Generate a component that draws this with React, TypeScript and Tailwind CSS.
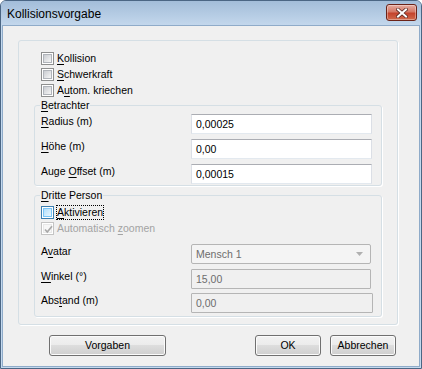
import React from 'react';

type BoxVariant = 'normal' | 'hover' | 'disabled';

const Ul = ({ children }: { children: React.ReactNode }) => (
  <span className="underline decoration-1 underline-offset-[2px]">{children}</span>
);

// Win7 style checkbox square
const CheckBox = ({ variant = 'normal', checked = false }: { variant?: BoxVariant; checked?: boolean }) => {
  const outer =
    variant === 'hover' ? 'border-[#3c7fb1]' : variant === 'disabled' ? 'border-[#c4c4c4]' : 'border-[#8e8f8f]';
  const inner =
    variant === 'hover'
      ? 'border-[#79c6f9] bg-[linear-gradient(135deg,#b1dffd,#e9f7fe)]'
      : variant === 'disabled'
        ? 'border-[#e8e8e8] bg-[#f7f7f7]'
        : 'border-[#b0b4ba] bg-[linear-gradient(135deg,#c9ccd1,#f6f6f6)]';

  return (
    <span className={`relative flex w-[13px] h-[13px] shrink-0 border ${outer} bg-white p-[1px]`}>
      <span className={`flex-1 border ${inner}`} />
      {checked && (
        <svg className="absolute left-[1px] top-[1px]" width="11" height="11" viewBox="0 0 11 11">
          <path d="M2 5.5 L4.3 8 L9 2.2" fill="none" stroke="#a8a8a8" strokeWidth="1.7" />
        </svg>
      )}
    </span>
  );
};

const CheckRow = ({
  children,
  variant,
  checked,
  focused = false,
  disabled = false,
}: {
  children: React.ReactNode;
  variant?: BoxVariant;
  checked?: boolean;
  focused?: boolean;
  disabled?: boolean;
}) => (
  <div className="flex items-center h-[16px] gap-[2px]">
    <CheckBox variant={variant} checked={checked} />
    <span
      className={`${focused ? 'border border-dotted border-black' : 'border border-transparent'} ${
        disabled ? 'text-[#a3a3a3]' : ''
      }`}
    >
      {children}
    </span>
  </div>
);

const FieldRow = ({ label, children, className = '' }: { label: React.ReactNode; children: React.ReactNode; className?: string }) => (
  <div className={`flex items-start ${className}`}>
    <span className="w-[150px] pt-[1px]">{label}</span>
    {children}
  </div>
);

const TextBox = ({ value, w = 'w-[181px]' }: { value: string; w?: string }) => (
  <div className={`${w} h-[20px] flex items-center pl-[4px] bg-white border border-[#dbdfe6] border-t-[#abadb3] border-b-[#e3e9ef]`}>
    {value}
  </div>
);

const DisabledBox = ({ value, w = 'w-[180px]' }: { value: string; w?: string }) => (
  <div className={`${w} h-[20px] flex items-center pl-[4px] bg-[#f0f0f0] border border-[#b5b5b5] rounded-[1px] text-[#6d6d6d]`}>
    {value}
  </div>
);

const Button = ({ children, w }: { children: React.ReactNode; w: string }) => (
  <div
    className={`${w} h-[21px] flex items-center justify-center rounded-[3px] border border-[#707070] bg-[linear-gradient(#f2f2f2_0%,#ebebeb_50%,#dddddd_50%,#cfcfcf_100%)] shadow-[inset_0_0_0_1px_#fbfbfb]`}
  >
    {children}
  </div>
);

export default function App() {
  return (
    <div className="w-[422px] h-[369px] flex flex-col bg-[#c4d9ee] border border-[#4b6684] rounded-t-[6px] overflow-hidden font-['Liberation_Sans',Arial,sans-serif] text-[10.5px] leading-[13px] text-black">
      {/* title bar */}
      <div className="h-[24px] shrink-0 flex items-start bg-[linear-gradient(#a3bdd9,#c3d7ec)] pl-[6px] pr-[4px]">
        <span className="mt-[5px] text-[12px] leading-[16px]">Kollisionsvorgabe</span>
        <div className="ml-auto mt-[3px] w-[31px] h-[17px] rounded-[3px] border border-[#6b2318] bg-[linear-gradient(#e6aca1,#d47866_45%,#c4432c_55%,#d06a4c)] flex items-center justify-center shadow-[inset_0_0_0_1px_rgba(255,255,255,0.35)]">
          <svg width="12" height="10" viewBox="0 0 12 10">
            <path d="M2 1.5 L10 8.5 M10 1.5 L2 8.5" stroke="#5a2a24" strokeWidth="3.6" strokeLinecap="square" />
            <path d="M2 1.5 L10 8.5 M10 1.5 L2 8.5" stroke="#ffffff" strokeWidth="2" strokeLinecap="square" />
          </svg>
        </div>
      </div>

      {/* client area */}
      <div className="flex-1 mx-[1px] mb-[1px] border border-[#8fabc9] bg-[#f0f0f0] flex flex-col">
        <div className="ml-[15px] mt-[14px] w-[380px] h-[285px] rounded-[3px] border border-[#d5dfe5] shadow-[1px_1px_0_#fff] flex flex-col">
          <div className="pl-[22px] pt-[9px] flex flex-col">
            <CheckRow>
              <Ul>K</Ul>ollision
            </CheckRow>
            <CheckRow>
              <Ul>S</Ul>chwerkraft
            </CheckRow>
            <CheckRow>
              A<Ul>u</Ul>tom. kriechen
            </CheckRow>
          </div>

          <fieldset className="ml-[15px] mt-[1px] w-[348px] rounded-[3px] border border-[#d5dfe5] shadow-[1px_1px_0_#fff] pl-[6px] pb-[1px]">
            <legend className="px-[1px] -ml-px">
              <Ul>B</Ul>etrachter
            </legend>
            <div className="pt-[2px] flex flex-col gap-[5px]">
              <FieldRow label={<><Ul>R</Ul>adius (m)</>}>
                <TextBox value="0,00025" />
              </FieldRow>
              <FieldRow label={<><Ul>H</Ul>öhe (m)</>}>
                <TextBox value="0,00" />
              </FieldRow>
              <FieldRow label={<>Auge <Ul>O</Ul>ffset (m)</>}>
                <TextBox value="0,00015" />
              </FieldRow>
            </div>
          </fieldset>

          <fieldset className="ml-[15px] mt-[3px] w-[348px] rounded-[3px] border border-[#d5dfe5] shadow-[1px_1px_0_#fff] pl-[6px] pb-[3px]">
            <legend className="px-[1px] -ml-px">
              <Ul>D</Ul>ritte Person
            </legend>
            <div className="pt-[2px] flex flex-col">
              <CheckRow variant="hover" focused>
                <Ul>A</Ul>ktivieren
              </CheckRow>
              <CheckRow variant="disabled" checked disabled>
                Automatisch <Ul>z</Ul>oomen
              </CheckRow>
              <FieldRow className="mt-[8px]" label={<>A<Ul>v</Ul>atar</>}>
                <div className="w-[180px] h-[20px] flex items-center pl-[4px] pr-[7px] rounded-[2px] border border-[#b5b5b5] bg-[#f4f4f4] text-[#6d6d6d]">
                  <span>Mensch 1</span>
                  <svg className="ml-auto" width="7" height="4" viewBox="0 0 7 4">
                    <path d="M0 0 H7 L3.5 4 Z" fill="#b0b0b0" />
                  </svg>
                </div>
              </FieldRow>
              <FieldRow className="mt-[5px]" label={<><Ul>W</Ul>inkel (°)</>}>
                <DisabledBox value="15,00" />
              </FieldRow>
              <FieldRow className="mt-[4px]" label={<>Abs<Ul>t</Ul>and (m)</>}>
                <DisabledBox value="0,00" w="w-[182px]" />
              </FieldRow>
            </div>
          </fieldset>
        </div>

        <div className="mt-[10px] flex">
          <div className="ml-[46px]">
            <Button w="w-[117px]">Vorgaben</Button>
          </div>
          <div className="ml-auto mr-[23px] flex gap-[9px]">
            <Button w="w-[66px]">OK</Button>
            <Button w="w-[66px]">Abbrechen</Button>
          </div>
        </div>
      </div>
    </div>
  );
}
